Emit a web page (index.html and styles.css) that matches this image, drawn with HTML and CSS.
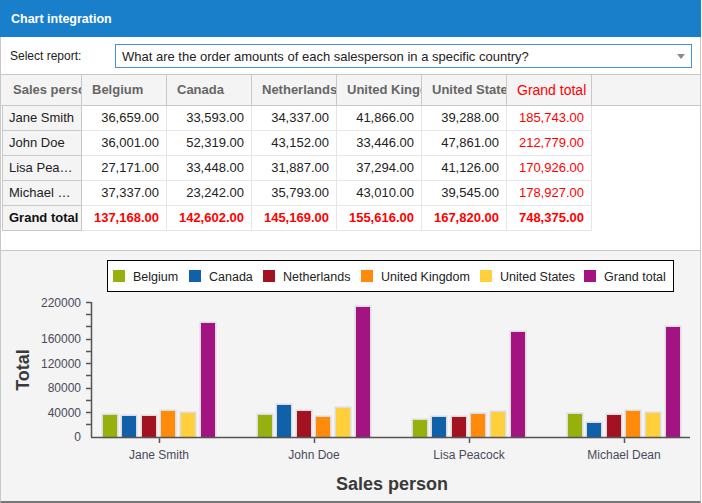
FILE: index.html
```html
<!DOCTYPE html>
<html>
<head>
<meta charset="utf-8">
<link rel="stylesheet" href="styles.css">
</head>
<body>
<div class="widget">
  <div class="titlebar">Chart integration</div>
  <div class="panel">
    <div class="report-row">
      <span class="report-label">Select report:</span>
      <div class="report-select">
        <span class="report-text">What are the order amounts of each salesperson in a specific country?</span>
        <span class="caret"></span>
      </div>
    </div>
    <div class="pivot">
      <div class="pivot-head">
        <div class="hcell hcell-first">Sales person</div>
        <div class="hcell">Belgium</div>
        <div class="hcell">Canada</div>
        <div class="hcell">Netherlands</div>
        <div class="hcell">United Kingdom</div>
        <div class="hcell">United States</div>
        <div class="hcell hcell-total">Grand total</div>
      </div>
      <div class="pivot-row">
        <div class="rcell">Jane Smith</div>
        <div class="vcell">36,659.00</div>
        <div class="vcell">33,593.00</div>
        <div class="vcell">34,337.00</div>
        <div class="vcell">41,866.00</div>
        <div class="vcell">39,288.00</div>
        <div class="vcell vcell-total">185,743.00</div>
      </div>
      <div class="pivot-row">
        <div class="rcell">John Doe</div>
        <div class="vcell">36,001.00</div>
        <div class="vcell">52,319.00</div>
        <div class="vcell">43,152.00</div>
        <div class="vcell">33,446.00</div>
        <div class="vcell">47,861.00</div>
        <div class="vcell vcell-total">212,779.00</div>
      </div>
      <div class="pivot-row">
        <div class="rcell">Lisa Peacock</div>
        <div class="vcell">27,171.00</div>
        <div class="vcell">33,448.00</div>
        <div class="vcell">31,887.00</div>
        <div class="vcell">37,294.00</div>
        <div class="vcell">41,126.00</div>
        <div class="vcell vcell-total">170,926.00</div>
      </div>
      <div class="pivot-row">
        <div class="rcell">Michael Dean</div>
        <div class="vcell">37,337.00</div>
        <div class="vcell">23,242.00</div>
        <div class="vcell">35,793.00</div>
        <div class="vcell">43,010.00</div>
        <div class="vcell">39,545.00</div>
        <div class="vcell vcell-total">178,927.00</div>
      </div>
      <div class="pivot-row pivot-row-total">
        <div class="rcell">Grand total</div>
        <div class="vcell">137,168.00</div>
        <div class="vcell">142,602.00</div>
        <div class="vcell">145,169.00</div>
        <div class="vcell">155,616.00</div>
        <div class="vcell">167,820.00</div>
        <div class="vcell">748,375.00</div>
      </div>
    </div>
  </div>
  <div class="chart">
    <svg class="chart-svg" width="699" height="250" viewBox="1 251 699 250">
      <g class="legend">
        <rect class="legend-box" x="107.5" y="260.5" width="566" height="31"/>
        <rect class="c-be" x="113" y="270" width="12" height="12"/>
        <text class="legend-text" x="133" y="280.5">Belgium</text>
        <rect class="c-ca" x="189" y="270" width="12" height="12"/>
        <text class="legend-text" x="209" y="280.5">Canada</text>
        <rect class="c-nl" x="263" y="270" width="12" height="12"/>
        <text class="legend-text" x="283" y="280.5">Netherlands</text>
        <rect class="c-uk" x="361" y="270" width="12" height="12"/>
        <text class="legend-text" x="381" y="280.5">United Kingdom</text>
        <rect class="c-us" x="480" y="270" width="12" height="12"/>
        <text class="legend-text" x="500" y="280.5">United States</text>
        <rect class="c-gt" x="584" y="270" width="12" height="12"/>
        <text class="legend-text" x="604" y="280.5">Grand total</text>
      </g>

      <g class="ticks">
        <line x1="86" y1="302.5" x2="91" y2="302.5"/>
        <line x1="86" y1="314.5" x2="91" y2="314.5"/>
        <line x1="86" y1="326.5" x2="91" y2="326.5"/>
        <line x1="86" y1="339.5" x2="91" y2="339.5"/>
        <line x1="86" y1="351.5" x2="91" y2="351.5"/>
        <line x1="86" y1="363.5" x2="91" y2="363.5"/>
        <line x1="86" y1="375.5" x2="91" y2="375.5"/>
        <line x1="86" y1="388.5" x2="91" y2="388.5"/>
        <line x1="86" y1="400.5" x2="91" y2="400.5"/>
        <line x1="86" y1="412.5" x2="91" y2="412.5"/>
        <line x1="86" y1="424.5" x2="91" y2="424.5"/>
        <line x1="159.5" y1="437" x2="159.5" y2="443"/>
        <line x1="314.5" y1="437" x2="314.5" y2="443"/>
        <line x1="469.5" y1="437" x2="469.5" y2="443"/>
        <line x1="624.5" y1="437" x2="624.5" y2="443"/>
      </g>
      <g class="ylabels">
        <text x="81" y="307">220000</text>
        <text x="81" y="343">160000</text>
        <text x="81" y="368">120000</text>
        <text x="81" y="392">80000</text>
        <text x="81" y="417">40000</text>
        <text x="81" y="441">0</text>
      </g>

      <g class="bars">
        <rect class="bar c-be" x="103" y="415" width="14" height="22"/>
        <rect class="bar c-ca" x="122" y="416" width="14" height="21"/>
        <rect class="bar c-nl" x="142" y="416" width="14" height="21"/>
        <rect class="bar c-uk" x="161" y="411" width="14" height="26"/>
        <rect class="bar c-us" x="181" y="413" width="14" height="24"/>
        <rect class="bar c-gt" x="201" y="323" width="14" height="114"/>

        <rect class="bar c-be" x="258" y="415" width="14" height="22"/>
        <rect class="bar c-ca" x="277" y="405" width="14" height="32"/>
        <rect class="bar c-nl" x="297" y="411" width="14" height="26"/>
        <rect class="bar c-uk" x="316" y="417" width="14" height="20"/>
        <rect class="bar c-us" x="336" y="408" width="14" height="29"/>
        <rect class="bar c-gt" x="356" y="307" width="14" height="130"/>

        <rect class="bar c-be" x="413" y="420" width="14" height="17"/>
        <rect class="bar c-ca" x="432" y="417" width="14" height="20"/>
        <rect class="bar c-nl" x="452" y="417" width="14" height="20"/>
        <rect class="bar c-uk" x="471" y="414" width="14" height="23"/>
        <rect class="bar c-us" x="491" y="412" width="14" height="25"/>
        <rect class="bar c-gt" x="511" y="332" width="14" height="105"/>

        <rect class="bar c-be" x="568" y="414" width="14" height="23"/>
        <rect class="bar c-ca" x="587" y="423" width="14" height="14"/>
        <rect class="bar c-nl" x="607" y="415" width="14" height="22"/>
        <rect class="bar c-uk" x="626" y="411" width="14" height="26"/>
        <rect class="bar c-us" x="646" y="413" width="14" height="24"/>
        <rect class="bar c-gt" x="666" y="327" width="14" height="110"/>
      </g>

      <g class="axes">
        <line x1="91.5" y1="302" x2="91.5" y2="437.5"/>
        <line x1="91" y1="437.5" x2="690" y2="437.5"/>
      </g>

      <g class="xlabels">
        <text x="159" y="459">Jane Smith</text>
        <text x="314" y="459">John Doe</text>
        <text x="469" y="459">Lisa Peacock</text>
        <text x="624" y="459">Michael Dean</text>
      </g>

      <text class="axis-title" x="392" y="490">Sales person</text>
      <text class="axis-title" transform="translate(29 370) rotate(-90)" x="0" y="0">Total</text>
    </svg>
  </div>
</div>
</body>
</html>
```

FILE: styles.css
```css
body {
  margin: 0;
  font-family: "Liberation Sans", Arial, sans-serif;
  color: #222;
}

.widget {
  width: 701px;
}

.titlebar {
  height: 37px;
  box-sizing: border-box;
  padding-left: 11px;
  background: #1a7fca;
  color: #fff;
  font-weight: bold;
  font-size: 12.5px;
  line-height: 38px;
}

.panel {
  height: 213px;
  background: #fff;
  border-left: 1px solid #c8c8c8;
  border-right: 1px solid #c8c8c8;
  border-bottom: 1px solid #c8c8c8;
}

.report-row {
  display: flex;
  align-items: center;
  padding: 7px 8px 6px 9px;
}

.report-label {
  width: 105px;
  flex: none;
  font-size: 12px;
  color: #222;
}

.report-select {
  flex: 1;
  height: 24px;
  box-sizing: border-box;
  display: flex;
  align-items: center;
  padding: 0 6px 0 6px;
  border: 1px solid #4a93d4;
  font-size: 13px;
  color: #222;
}

.report-text {
  white-space: nowrap;
}

.caret {
  margin-left: auto;
  width: 0;
  height: 0;
  border-left: 4px solid transparent;
  border-right: 4px solid transparent;
  border-top: 5px solid #8c8c8c;
}

.pivot-head {
  display: flex;
  height: 30px;
  background: #f4f4f4;
  border-top: 1px solid #c8c8c8;
  border-bottom: 1px solid #c8c8c8;
}

.hcell {
  width: 85px;
  flex: none;
  box-sizing: border-box;
  padding-left: 10px;
  border-right: 1px solid #c8c8c8;
  font-size: 13px;
  font-weight: bold;
  color: #666;
  line-height: 30px;
  white-space: nowrap;
  overflow: hidden;
}

.hcell-first {
  width: 81px;
  padding-left: 12px;
}

.hcell-total {
  color: #f00;
  font-weight: normal;
  font-size: 14px;
}

.pivot-row {
  display: flex;
  height: 25px;
}

.rcell {
  width: 80px;
  flex: none;
  margin-left: 1px;
  box-sizing: border-box;
  padding: 0 4px 0 6px;
  background: #f4f4f4;
  border-left: 1px solid #c8c8c8;
  border-right: 1px solid #c8c8c8;
  border-bottom: 1px solid #c8c8c8;
  font-size: 13px;
  line-height: 24px;
  color: #222;
  white-space: nowrap;
  overflow: hidden;
  text-overflow: ellipsis;
}

.vcell {
  width: 85px;
  flex: none;
  box-sizing: border-box;
  padding-right: 7px;
  border-right: 1px solid #e6e6e6;
  border-bottom: 1px solid #e6e6e6;
  text-align: right;
  font-size: 13px;
  line-height: 24px;
  color: #222;
}

.vcell-total {
  color: #f00;
}

.pivot-row-total .rcell {
  padding-right: 0;
  font-weight: bold;
  color: #111;
}

.pivot-row-total .vcell {
  font-weight: bold;
  color: #f00;
}

.chart {
  height: 250px;
  background: #f4f4f4;
  border-left: 1px solid #c8c8c8;
  border-right: 1px solid #c8c8c8;
  border-bottom: 2px solid #777;
}

.chart-svg {
  display: block;
  font-family: "Liberation Sans", Arial, sans-serif;
}

.legend-box {
  fill: #fff;
  stroke: #000;
  stroke-width: 1;
}

.legend-text {
  font-size: 12.5px;
  fill: #222;
}

.c-be { fill: #96b00d; }
.c-ca { fill: #1160aa; }
.c-nl { fill: #a31220; }
.c-uk { fill: #ff8a0b; }
.c-us { fill: #ffd03c; }
.c-gt { fill: #a41382; }

.bar {
  stroke: #dcdcdc;
  stroke-width: 3;
  paint-order: stroke;
}

.ticks line,
.axes line {
  stroke: #555;
  stroke-width: 1.5;
}

.ylabels text {
  font-size: 12px;
  fill: #4a4a5a;
  text-anchor: end;
}

.xlabels text {
  font-size: 12px;
  fill: #4a4a5a;
  text-anchor: middle;
}

.axis-title {
  font-size: 18px;
  font-weight: bold;
  fill: #3a3a3a;
  text-anchor: middle;
}
```
